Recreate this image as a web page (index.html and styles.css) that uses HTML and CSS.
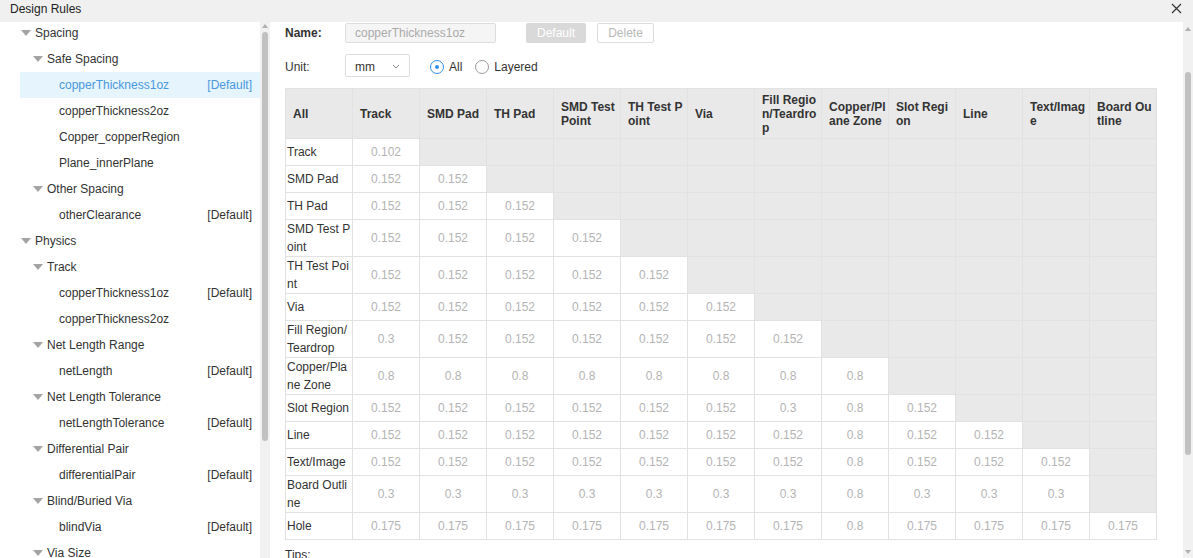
FILE: index.html
```html
<!DOCTYPE html>
<html lang="en">
<head>
  <meta charset="UTF-8">
  <title>Design Rules</title>
  <link rel="stylesheet" href="styles.css">
</head>
<body>
  <div class="titlebar">
    <span>Design Rules</span>
    <svg class="close" width="11" height="11" viewBox="0 0 11 11"><path d="M1 1L10 10M10 1L1 10" stroke="#333" stroke-width="1.2" fill="none"/></svg>
  </div>
  <div class="main">
    <div class="tree-pane">
      <ul class="tree">
        <li class="group lv1"><i class="caret"></i>Spacing</li>
        <li class="group lv2"><i class="caret"></i>Safe Spacing</li>
        <li class="leaf selected"><span>copperThickness1oz</span><span>[Default]</span></li>
        <li class="leaf"><span>copperThickness2oz</span></li>
        <li class="leaf"><span>Copper_copperRegion</span></li>
        <li class="leaf"><span>Plane_innerPlane</span></li>
        <li class="group lv2"><i class="caret"></i>Other Spacing</li>
        <li class="leaf"><span>otherClearance</span><span>[Default]</span></li>
        <li class="group lv1"><i class="caret"></i>Physics</li>
        <li class="group lv2"><i class="caret"></i>Track</li>
        <li class="leaf"><span>copperThickness1oz</span><span>[Default]</span></li>
        <li class="leaf"><span>copperThickness2oz</span></li>
        <li class="group lv2"><i class="caret"></i>Net Length Range</li>
        <li class="leaf"><span>netLength</span><span>[Default]</span></li>
        <li class="group lv2"><i class="caret"></i>Net Length Tolerance</li>
        <li class="leaf"><span>netLengthTolerance</span><span>[Default]</span></li>
        <li class="group lv2"><i class="caret"></i>Differential Pair</li>
        <li class="leaf"><span>differentialPair</span><span>[Default]</span></li>
        <li class="group lv2"><i class="caret"></i>Blind/Buried Via</li>
        <li class="leaf"><span>blindVia</span><span>[Default]</span></li>
        <li class="group lv2"><i class="caret"></i>Via Size</li>
      </ul>
    </div>
    <div class="scrollbar left-bar"><span class="arrow-up"></span><span class="thumb"></span></div>

    <div class="content">
      <div class="form-row">
        <label class="field-label bold">Name:</label>
        <div class="text-input">copperThickness1oz</div>
        <button class="btn btn-default">Default</button>
        <button class="btn btn-delete">Delete</button>
      </div>
      <div class="form-row unit-row">
        <label class="field-label">Unit:</label>
        <div class="select">mm<svg width="8" height="5" viewBox="0 0 8 5"><path d="M1 1L4 4L7 1" stroke="#888" stroke-width="1" fill="none"/></svg></div>
        <label class="radio checked"><i></i>All</label>
        <label class="radio"><i></i>Layered</label>
      </div>
      <table class="rules" id="rulesTable">
        <thead><tr id="headRow"></tr></thead>
        <tbody id="rulesBody"></tbody>
      </table>
      <div class="tips">Tips:</div>
    </div>

    <div class="scrollbar right-bar"><span class="arrow-up"></span><span class="thumb"></span><span class="arrow-down"></span></div>
  </div>

  <script>
    const names = ['Track', 'SMD Pad', 'TH Pad', 'SMD Test Point', 'TH Test Point', 'Via',
      'Fill Region/Teardrop', 'Copper/Plane Zone', 'Slot Region', 'Line', 'Text/Image', 'Board Outline'];
    const rows = [
      ['Track', ['0.102']],
      ['SMD Pad', ['0.152', '0.152']],
      ['TH Pad', ['0.152', '0.152', '0.152']],
      ['SMD Test Point', ['0.152', '0.152', '0.152', '0.152']],
      ['TH Test Point', ['0.152', '0.152', '0.152', '0.152', '0.152']],
      ['Via', ['0.152', '0.152', '0.152', '0.152', '0.152', '0.152']],
      ['Fill Region/Teardrop', ['0.3', '0.152', '0.152', '0.152', '0.152', '0.152', '0.152']],
      ['Copper/Plane Zone', ['0.8', '0.8', '0.8', '0.8', '0.8', '0.8', '0.8', '0.8']],
      ['Slot Region', ['0.152', '0.152', '0.152', '0.152', '0.152', '0.152', '0.3', '0.8', '0.152']],
      ['Line', ['0.152', '0.152', '0.152', '0.152', '0.152', '0.152', '0.152', '0.8', '0.152', '0.152']],
      ['Text/Image', ['0.152', '0.152', '0.152', '0.152', '0.152', '0.152', '0.152', '0.8', '0.152', '0.152', '0.152']],
      ['Board Outline', ['0.3', '0.3', '0.3', '0.3', '0.3', '0.3', '0.3', '0.8', '0.3', '0.3', '0.3']],
      ['Hole', ['0.175', '0.175', '0.175', '0.175', '0.175', '0.175', '0.175', '0.8', '0.175', '0.175', '0.175', '0.175']]
    ];

    const headRow = document.getElementById('headRow');
    ['All'].concat(names).forEach(n => {
      const th = document.createElement('th');
      th.textContent = n;
      headRow.appendChild(th);
    });

    const body = document.getElementById('rulesBody');
    rows.forEach(([label, values]) => {
      const tr = document.createElement('tr');
      const th = document.createElement('td');
      th.className = 'row-label';
      th.textContent = label;
      tr.appendChild(th);
      for (let i = 0; i < names.length; i++) {
        const td = document.createElement('td');
        if (i < values.length) {
          td.textContent = values[i];
        } else {
          td.className = 'off';
        }
        tr.appendChild(td);
      }
      body.appendChild(tr);
    });
  </script>
</body>
</html>
```

FILE: styles.css
```css
body { margin: 0; font-family: "Liberation Sans", Arial, sans-serif; font-size: 12px; color: #333; background: #fff; overflow: hidden; }

.titlebar { height: 22px; background: #f0f0f0; display: flex; align-items: flex-start; justify-content: space-between; padding: 1px 11px 0 10px; box-sizing: border-box; line-height: 16px; color: #222; }
.titlebar .close { margin-top: 2px; }

.main { display: flex; height: 536px; overflow: hidden; }

/* left tree */
.tree-pane { width: 260px; flex: none; overflow: hidden; }
.tree { list-style: none; margin: -2px 0 0 20px; padding: 0; }
.tree li { height: 26px; line-height: 26px; display: flex; align-items: center; white-space: nowrap; color: #333; }
.tree .lv1 { padding-left: 1px; }
.tree .lv2 { padding-left: 13px; }
.tree .leaf { padding: 0 8px 0 39px; justify-content: space-between; }
.tree .selected { background: #e6f4fd; color: #4a98de; }
.caret { width: 0; height: 0; border-left: 5px solid transparent; border-right: 5px solid transparent; border-top: 6px solid #a4a4a4; margin-right: 4px; }

/* fake scrollbars */
.scrollbar { width: 10px; flex: none; background: #f1f1f1; display: flex; flex-direction: column; align-items: center; }
.arrow-up { width: 0; height: 0; border-left: 3px solid transparent; border-right: 3px solid transparent; border-bottom: 4px solid #b0b0b0; }
.arrow-down { width: 0; height: 0; border-left: 3px solid transparent; border-right: 3px solid transparent; border-top: 4px solid #b0b0b0; margin-top: auto; margin-bottom: 4px; }
.thumb { width: 6px; background: #c1c1c1; border-radius: 3px; }
.left-bar .arrow-up { margin-top: 2px; }
.left-bar .thumb { margin-top: 4px; height: 409px; }
.right-bar { width: 10px; }
.right-bar .arrow-up { margin-top: 5px; }
.right-bar .thumb { margin-top: 41px; height: 383px; }

/* right side */
.content { flex: 1; padding: 1px 0 0 15px; min-width: 0; }
.form-row { display: flex; align-items: center; height: 20px; margin-bottom: 11px; }
.unit-row { height: 23px; }
.unit-row .field-label, .unit-row .radio { margin-top: 2px; }
.field-label { width: 60px; flex: none; }
.bold { font-weight: bold; }
.text-input { width: 151px; height: 20px; box-sizing: border-box; border: 1px solid #ddd; border-radius: 2px; background: #f5f5f5; color: #aaa; line-height: 18px; padding-left: 9px; font-size: 12px; }
.btn { font-family: inherit; font-size: 12px; height: 20px; box-sizing: border-box; padding: 0; border-radius: 2px; }
.btn-default { width: 60px; margin-left: 30px; background: #d9d9d9; color: #fff; border: none; }
.btn-delete { width: 57px; margin-left: 11px; background: #fff; color: #b8b8b8; border: 1px solid #ddd; }

.select { width: 65px; height: 23px; box-sizing: border-box; border: 1px solid #ddd; border-radius: 2px; display: flex; align-items: center; justify-content: space-between; padding: 2px 9px 0 9px; color: #333; }
.radio { display: flex; align-items: center; color: #333; }
.radio i { width: 14px; height: 14px; box-sizing: border-box; border: 1px solid #9a9a9a; border-radius: 50%; margin-right: 5px; display: flex; align-items: center; justify-content: center; }
.radio.checked { margin-left: 20px; }
.radio.checked i { border-color: #2f8fe9; }
.radio.checked i::after { content: ""; width: 4px; height: 4px; border-radius: 50%; background: #2f8fe9; }
.radio + .radio { margin-left: 13px; }

/* matrix table */
.rules { border-collapse: collapse; table-layout: fixed; width: 872px; font-size: 12px; }
.rules th, .rules td { border: 1px solid #e2e2e2; word-break: break-all; }
.rules th { background: #e9e9e9; height: 49px; line-height: 14px; text-align: left; padding: 0 2px 0 7px; font-weight: bold; color: #333; }
.rules td { height: 26px; line-height: 18px; padding: 0; text-align: center; color: #b4b4b4; }
.rules td.row-label { text-align: left; padding-left: 1px; color: #333; }
.rules td.off { background: #e9e9e9; }

.tips { margin-top: 8px; color: #333; }
```
